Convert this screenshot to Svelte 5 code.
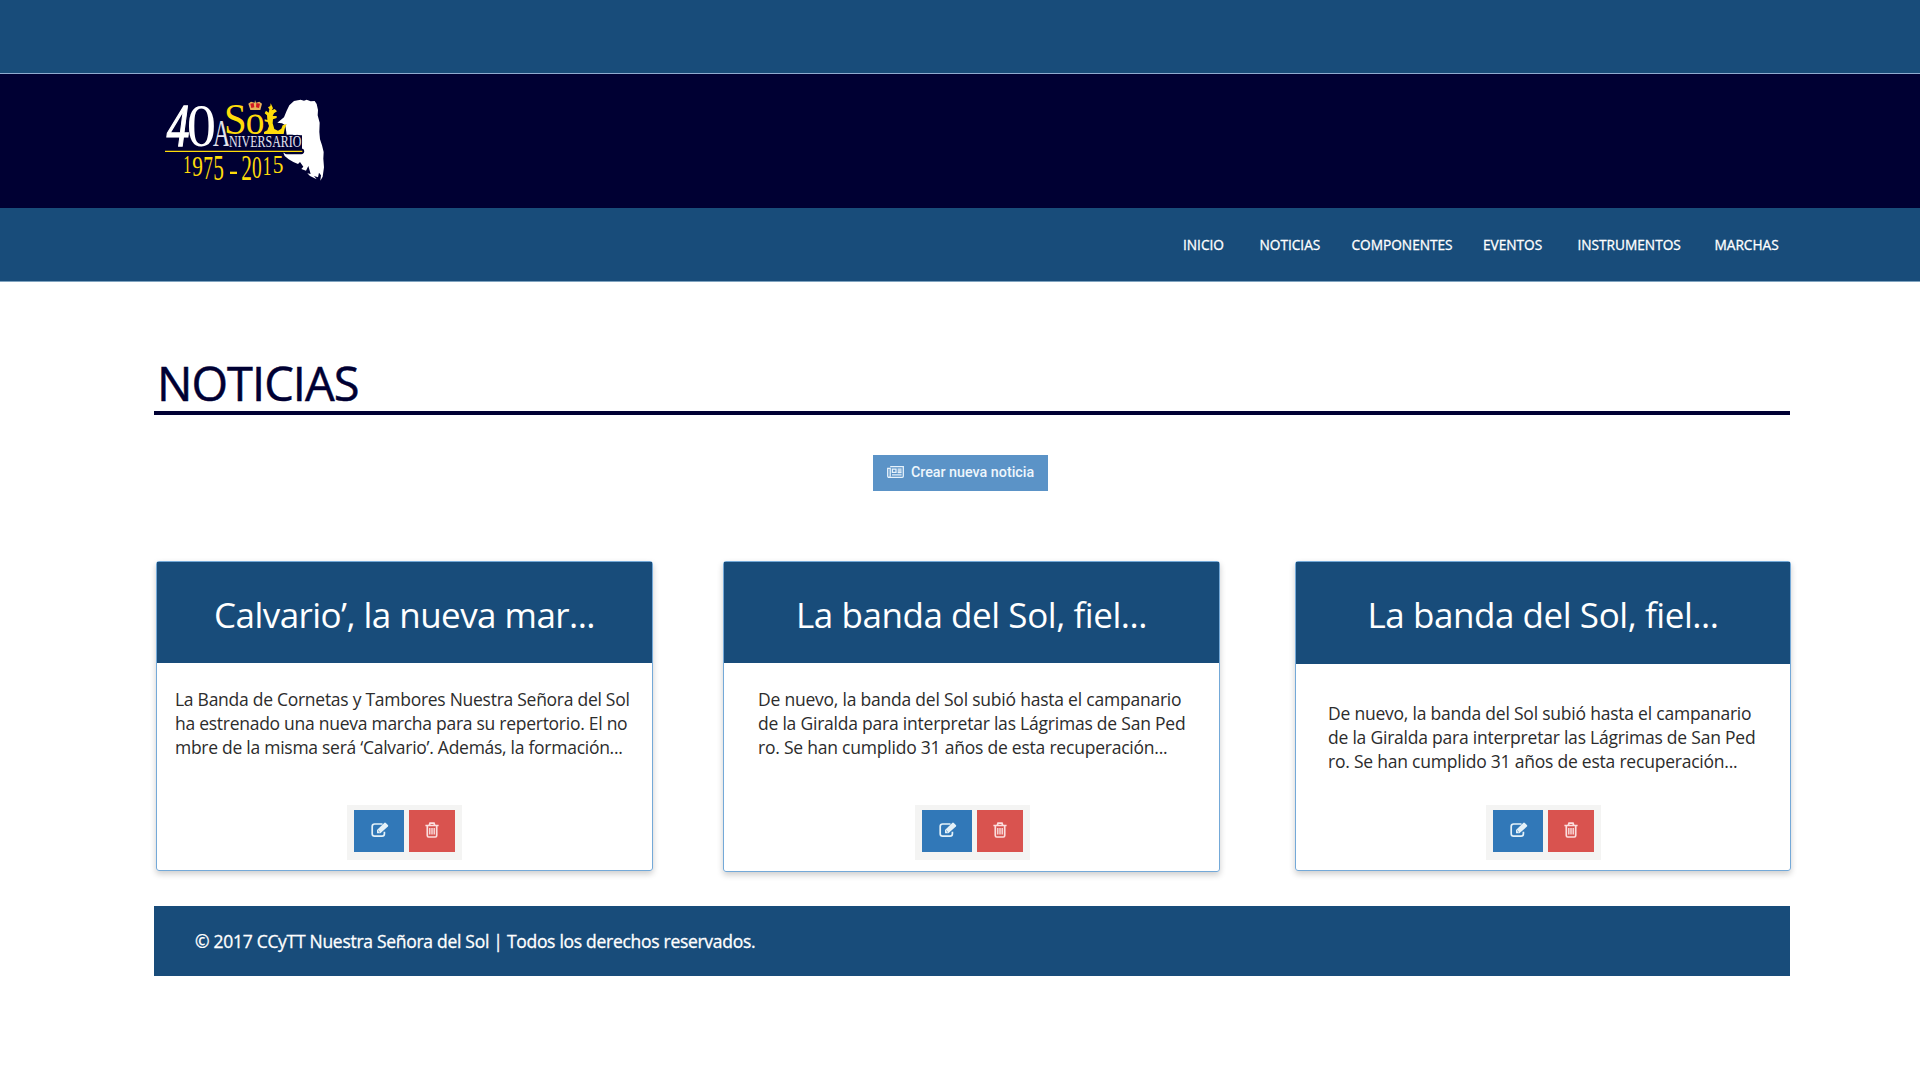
<script>
  const links = ['INICIO', 'NOTICIAS', 'COMPONENTES', 'EVENTOS', 'INSTRUMENTOS', 'MARCHAS'];

  const giralda = [
    'De nuevo, la banda del Sol subió hasta el campanario',
    'de la Giralda para interpretar las Lágrimas de San Ped',
    'ro. Se han cumplido 31 años de esta recuperación...'
  ];

  const news = [
    {
      kind: 'first',
      title: 'Calvario’, la nueva mar...',
      lines: [
        'La Banda de Cornetas y Tambores Nuestra Señora del Sol',
        'ha estrenado una nueva marcha para su repertorio. El no',
        'mbre de la misma será ‘Calvario’. Además, la formación...'
      ]
    },
    { kind: 'second', title: 'La banda del Sol, fiel...', lines: giralda },
    { kind: 'third', title: 'La banda del Sol, fiel...', lines: giralda }
  ];

  // Digits of the anniversary years: glyph, left, baseline, width, size
  const years = [
    ['1', 130, 338, 24, 73],
    ['9', 157, 347, 32, 86],
    ['7', 190, 358, 29, 100],
    ['5', 220, 361, 32, 106],
    ['2', 304, 361, 32, 106],
    ['0', 336, 354, 29, 94],
    ['1', 368, 346, 26, 84],
    ['5', 398, 338, 32, 75]
  ];
</script>

<div class="topbar"></div>

<header class="brand">
  <svg class="logo" viewBox="60 90 558 300" role="img" aria-label="Sol, 40 aniversario">
    <path
      class="white"
      d="M412 188 L432 172 L440 152 L448 136 L462 123 L482 119 L492 122 L500 119 L512 124 L524 123 L530 132 L534 150 L533 166 L539 188 L538 216 L540 238 L546 256 L551 276 L550 296 L552 322 L548 350 L541 362 L543 346 L537 338 L534 352 L522 348 L530 358 L510 348 L502 340 L512 342 L505 318 L498 332 L484 327 L490 320 L480 306 L474 312 L460 306 L446 298 L434 288 L430 278 L486 280 L486 226 L440 224 L436 196 L426 190 Z"
    />
    <g class="serif">
      <text class="white four" x="80" y="257" font-size="186" textLength="68" lengthAdjust="spacingAndGlyphs">4</text>
      <text class="white" x="140" y="257" font-size="186" textLength="88" lengthAdjust="spacingAndGlyphs">0</text>
      <text class="gold" x="252" y="221" font-size="130" textLength="68" lengthAdjust="spacingAndGlyphs">S</text>
      <text class="gold" x="317" y="221" font-size="124" textLength="56" lengthAdjust="spacingAndGlyphs">o</text>
      <text class="silver" x="219" y="259" font-size="112" textLength="52" lengthAdjust="spacingAndGlyphs">A</text>
      <text class="silver cut" x="267" y="261" font-size="49" textLength="217" lengthAdjust="spacingAndGlyphs">NIVERSARIO</text>
      {#each years as [glyph, x, y, width, size]}
        <text class="gold" {x} {y} font-size={size} textLength={width} lengthAdjust="spacingAndGlyphs">{glyph}</text>
      {/each}
    </g>
    <path class="gold" d="M270 335 h21 v7 h-21 Z" />
    <!-- statue forming the last letter -->
    <path
      class="gold"
      d="M372 222 L372 216 L382 211 L387 198 L383 186 L374 184 L374 178 L382 180 L381 166 L374 160 L378 152 L386 158 L388 148 L384 142 L391 138 L392 130 L396 138 L399 145 L395 151 L404 147 L411 154 L402 160 L398 168 L410 168 L410 174 L399 178 L398 190 L403 207 L414 212 L424 206 L428 196 L440 192 L434 206 L431 222 Z"
    />
    <!-- crown -->
    <path class="crown" d="M331 150 L325 131 L333 125 L344 128 L345 120 L348 128 L358 125 L366 131 L361 150 Z" />
    <path class="ruby" d="M331 131 L341 129 L343 142 L334 144 Z M349 129 L360 131 L357 144 L348 142 Z" />
    <path class="rule-edge" d="M440 274 H484" />
    <path class="rule" d="M75 274 H487" />
  </svg>
</header>

<nav>
  {#each links as link}
    <a href="#top">{link}</a>
  {/each}
</nav>

<main>
  <h1>NOTICIAS</h1>

  <button class="create">
    <svg viewBox="0 0 17 12" aria-hidden="true">
      <path d="M3.2 .7 H16.3 V10.2 Q16.3 11.3 15.2 11.3 H2 Q.7 11.3 .7 10 V2.4 H3.2 V9.8 Q3.2 11.3 2 11.3" />
      <path d="M5.4 3.2 H9 V6.3 H5.4 Z M10.6 3.1 H14.6 M10.6 4.8 H14.6 M10.6 6.5 H14.6 M5 8.8 H14.6" />
    </svg>
    <span>Crear nueva noticia</span>
  </button>

  <section class="cards">
    {#each news as item}
      <article class={item.kind}>
        <h2>{item.title}</h2>
        <p>
          {#each item.lines as line}
            <span>{line}</span>
          {/each}
        </p>
        <div class="actions">
          <button class="edit" aria-label="Editar">
            <svg viewBox="0 0 18 16" aria-hidden="true">
              <path class="line" d="M11.5 2 H3.6 Q1.2 2 1.2 4.4 V11.8 Q1.2 14.2 3.6 14.2 H11 Q13.4 14.2 13.4 11.8 V9.8" />
              <path class="fill" d="M6 11.2 V8 L13.2 .9 Q14 .2 14.8 .9 L16.9 3 Q17.6 3.8 16.9 4.6 L9.4 11.2 Z" />
              <path class="notch" d="M7.2 8.6 L8.8 10.2" />
            </svg>
          </button>
          <button class="remove" aria-label="Eliminar">
            <svg viewBox="0 0 14 16" aria-hidden="true">
              <path class="line" d="M.4 3.5 H13.6 M4.3 3.3 L5 1.2 H9 L9.7 3.3 M2.3 3.6 V13.4 Q2.3 15 3.6 15 H10.4 Q11.7 15 11.7 13.4 V3.6" />
              <path class="bars" d="M4.8 6 V12.6 M7 6 V12.6 M9.2 6 V12.6" />
            </svg>
          </button>
        </div>
      </article>
    {/each}
  </section>

  <footer>© 2017 CCyTT Nuestra Señora del Sol | Todos los derechos reservados.</footer>
</main>

<style>
  :global(body) {
    background: #fff;
    font-family: 'Open Sans', 'Noto Sans', sans-serif;
  }

  .topbar {
    height: 73px;
    background: #184c7a;
    border-bottom: 1px solid #8fabd0;
  }

  .brand {
    box-sizing: border-box;
    height: 134px;
    padding: 16px 0 0 160px;
    background: #000033;
  }
  .logo {
    display: block;
    width: 186px;
    height: 100px;
  }
  .serif { font-family: 'Liberation Serif', serif; }
  .white { fill: #fff; }
  .four {
    font-style: italic;
    stroke: #fff;
    stroke-width: 4;
  }
  .gold { fill: #ffdc0a; }
  .silver { fill: #e4e4ee; }
  .cut {
    stroke: #000033;
    stroke-width: 7;
    paint-order: stroke;
  }
  .crown { fill: #e8b25a; }
  .ruby { fill: #d01822; }
  .rule-edge {
    stroke: #000033;
    stroke-width: 17;
    stroke-linecap: round;
  }
  .rule {
    stroke: #ffdc0a;
    stroke-width: 3.4;
  }

  nav {
    box-sizing: border-box;
    display: grid;
    grid-template-columns: 76.5px 92px 131.5px 94.5px 137px auto;
    align-items: center;
    height: 74px;
    padding-left: 1183px;
    background: #184c7a;
    border-bottom: 1px solid #7fa3bf;
  }
  nav a {
    color: #fff;
    font-size: 13.7px;
    -webkit-text-stroke: 0.3px #fff;
    letter-spacing: -0.02px;
    text-decoration: none;
  }

  main {
    display: flex;
    flex-direction: column;
    width: 1636px;
    margin-left: 154px;
  }
  h1 {
    box-sizing: border-box;
    height: 133px;
    margin: 0;
    padding: 69px 0 0 3px;
    border-bottom: 4px solid #000033;
    color: #000033;
    font-size: 47px;
    font-weight: 400;
    line-height: 64px;
    letter-spacing: -0.95px;
    -webkit-text-stroke: 0.5px #000033;
  }

  button {
    display: flex;
    align-items: center;
    justify-content: center;
    padding: 0;
    border: 0;
  }
  svg { fill: none; }

  .create {
    align-self: flex-start;
    gap: 7px;
    width: 175px;
    height: 36px;
    margin: 40px 0 0 719px;
    padding-bottom: 2px;
    background: #5b93c7;
    color: #eef6fc;
    font: 500 14.3px Roboto, sans-serif;
  }
  .create svg {
    width: 17px;
    height: 12px;
    stroke: #e6f2fb;
    stroke-width: 1.3;
  }

  .cards {
    display: grid;
    grid-template-columns: 567px 572px 495px;
    height: 345px;
    margin-top: 70px;
    padding-left: 2px;
  }
  article {
    box-sizing: border-box;
    display: flex;
    flex-direction: column;
    align-items: flex-start;
    width: 497px;
    height: 310px;
    border: 1px solid #74a9d8;
    border-radius: 3px;
    box-shadow: 0 3px 6px rgba(0, 0, 0, 0.2);
  }
  .second { height: 311px; }
  .third { width: 496px; }
  h2 {
    align-self: stretch;
    height: 101px;
    margin: 0;
    background: #184c7a;
    color: #fff;
    font-size: 35px;
    font-weight: 400;
    line-height: 105px;
    text-align: center;
    letter-spacing: -0.43px;
  }
  .first h2 { letter-spacing: -0.55px; }
  p {
    display: flex;
    flex-direction: column;
    height: 142px;
    margin: 0;
    padding: 24px 0 0 34px;
    box-sizing: border-box;
    color: #2c2c2c;
    font-size: 17.5px;
    line-height: 24px;
    letter-spacing: -0.22px;
    white-space: nowrap;
  }
  .first p {
    padding-left: 18px;
    letter-spacing: -0.27px;
  }
  .third h2 { height: 102px; }
  .third p {
    height: 141px;
    padding: 37px 0 0 32px;
  }

  .actions {
    box-sizing: border-box;
    display: flex;
    gap: 5px;
    width: 115px;
    height: 55px;
    margin-left: 190px;
    padding: 5px 7px;
    background: #f4f4f3;
  }
  .second .actions { margin-left: 191px; }
  .edit {
    width: 50px;
    height: 42px;
    background: #3178b8;
  }
  .remove {
    width: 46px;
    height: 42px;
    background: #d9534f;
  }
  .edit svg {
    width: 18px;
    height: 16px;
    margin: 0 0 3px 1px;
  }
  .remove svg {
    width: 14px;
    height: 16px;
    margin-bottom: 2px;
  }
  .line {
    stroke: #e4f1f8;
    stroke-width: 1.7;
  }
  .fill { fill: #e4f1f8; }
  .notch {
    stroke: #3178b8;
    stroke-width: 0.8;
  }
  .remove .line { stroke: #fbdede; }
  .bars {
    stroke: #fbdede;
    stroke-width: 1.4;
  }

  footer {
    height: 70px;
    padding-left: 41px;
    background: #184c7a;
    color: #fff;
    font-size: 17.5px;
    line-height: 70px;
    letter-spacing: -0.29px;
    -webkit-text-stroke: 0.3px #fff;
  }
</style>
